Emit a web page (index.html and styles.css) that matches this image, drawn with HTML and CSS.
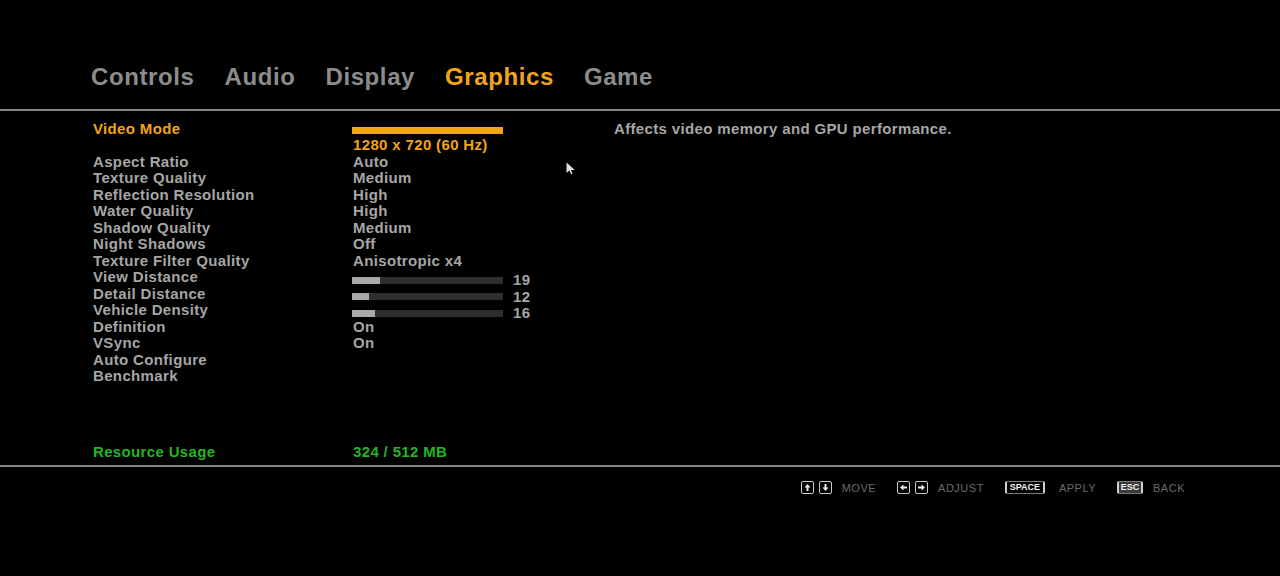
FILE: index.html
```html
<!DOCTYPE html>
<html>
<head>
<meta charset="utf-8">
<link rel="stylesheet" href="styles.css">
</head>
<body>
<div class="screen">
  <nav class="tabs">
    <span class="tab">Controls</span>
    <span class="tab">Audio</span>
    <span class="tab">Display</span>
    <span class="tab active">Graphics</span>
    <span class="tab">Game</span>
  </nav>
  <div class="rule"></div>
  <main class="content">
    <section class="settings">
      <div class="row selected">
        <span class="label">Video Mode</span>
        <div class="value">
          <div class="mode-bar"></div>
          <div class="mode-text">1280 x 720 (60 Hz)</div>
        </div>
      </div>
      <div class="row"><span class="label">Aspect Ratio</span><span class="value">Auto</span></div>
      <div class="row"><span class="label">Texture Quality</span><span class="value">Medium</span></div>
      <div class="row"><span class="label">Reflection Resolution</span><span class="value">High</span></div>
      <div class="row"><span class="label">Water Quality</span><span class="value">High</span></div>
      <div class="row"><span class="label">Shadow Quality</span><span class="value">Medium</span></div>
      <div class="row"><span class="label">Night Shadows</span><span class="value">Off</span></div>
      <div class="row"><span class="label">Texture Filter Quality</span><span class="value">Anisotropic x4</span></div>
      <div class="row"><span class="label">View Distance</span>
        <div class="value slider"><div class="track"><div class="fill" style="width:28px"></div></div><span class="num">19</span></div></div>
      <div class="row"><span class="label">Detail Distance</span>
        <div class="value slider"><div class="track"><div class="fill" style="width:17px"></div></div><span class="num">12</span></div></div>
      <div class="row"><span class="label">Vehicle Density</span>
        <div class="value slider"><div class="track"><div class="fill" style="width:23px"></div></div><span class="num">16</span></div></div>
      <div class="row"><span class="label">Definition</span><span class="value">On</span></div>
      <div class="row"><span class="label">VSync</span><span class="value">On</span></div>
      <div class="row"><span class="label">Auto Configure</span></div>
      <div class="row"><span class="label">Benchmark</span></div>
      <div class="row resource"><span class="label">Resource Usage</span><span class="value">324 / 512 MB</span></div>
    </section>
    <aside class="desc">Affects video memory and GPU performance.</aside>
  </main>
  <div class="rule"></div>
  <footer class="hints">
    <div class="hint">
      <svg class="key" viewBox="0 0 13 13" width="13" height="13"><rect x="0.5" y="0.5" width="12" height="12" rx="1.5" fill="none" stroke="#c8c8c8"/><path d="M6.5 3 L3.5 6.5 H5.5 V10 H7.5 V6.5 H9.5 Z" fill="#e8e8e8"/></svg>
      <svg class="key" viewBox="0 0 13 13" width="13" height="13"><rect x="0.5" y="0.5" width="12" height="12" rx="1.5" fill="none" stroke="#c8c8c8"/><path d="M6.5 10 L3.5 6.5 H5.5 V3 H7.5 V6.5 H9.5 Z" fill="#e8e8e8"/></svg>
      <span class="hint-label">MOVE</span>
    </div>
    <div class="hint">
      <svg class="key" viewBox="0 0 13 13" width="13" height="13"><rect x="0.5" y="0.5" width="12" height="12" rx="1.5" fill="none" stroke="#c8c8c8"/><path d="M3 6.5 L6.5 3.5 V5.5 H10 V7.5 H6.5 V9.5 Z" fill="#e8e8e8"/></svg>
      <svg class="key" viewBox="0 0 13 13" width="13" height="13"><rect x="0.5" y="0.5" width="12" height="12" rx="1.5" fill="none" stroke="#c8c8c8"/><path d="M10 6.5 L6.5 3.5 V5.5 H3 V7.5 H6.5 V9.5 Z" fill="#e8e8e8"/></svg>
      <span class="hint-label">ADJUST</span>
    </div>
    <div class="hint">
      <span class="keycap space">SPACE</span>
      <span class="hint-label wide">APPLY</span>
    </div>
    <div class="hint">
      <span class="keycap esc">ESC</span>
      <span class="hint-label">BACK</span>
    </div>
  </footer>
  <svg class="cursor" viewBox="0 0 10 13" width="10" height="13"><path d="M0.5 0.5 L0.5 11 L3.3 8.6 L5.2 12.2 L6.6 11.5 L4.8 8 L8.8 8 Z" fill="#e0e0e0"/></svg>
</div>
</body>
</html>
```

FILE: styles.css
```css
* { box-sizing: border-box; }

html, body {
  margin: 0;
  padding: 0;
  background: #000;
}

body {
  font-family: "Liberation Sans", Arial, sans-serif;
  font-weight: bold;
  width: 1280px;
  height: 576px;
  overflow: hidden;
}

.screen {
  position: relative;
  width: 1280px;
  height: 576px;
  background: #000;
}

.tabs {
  display: flex;
  gap: 30px;
  padding: 63px 0 0 91px;
  height: 109px;
}

.tab {
  font-size: 24px;
  line-height: 28px;
  letter-spacing: 0.6px;
  color: #8c8c8c;
}

.tab.active {
  color: #f2a41c;
}

.rule {
  height: 2px;
  background: #858585;
}

.content {
  display: flex;
  height: 354px;
  padding: 10px 0 5px 93px;
}

.settings {
  display: flex;
  flex-direction: column;
  width: 521px;
}

.row {
  display: flex;
  font-size: 15px;
  line-height: 16.5px;
  letter-spacing: 0.35px;
  color: #a6a6a6;
}

.label {
  width: 260px;
  flex: none;
}

.value {
  flex: 1;
}

.selected .label {
  color: #f2a41c;
}

.mode-bar {
  height: 7px;
  width: 151px;
  margin: 6px 0 0 -1px;
  background: #f2a41c;
}

.mode-text {
  margin-top: 3px;
  color: #f2a41c;
}

.slider {
  display: flex;
  align-items: center;
  padding-top: 6px;
  height: 16.5px;
}

.track {
  width: 151px;
  height: 7px;
  margin-left: -1px;
  background: #2e2e2e;
}

.fill {
  height: 100%;
  background: #a9a9a9;
}

.num {
  margin-left: 10px;
}

.resource {
  margin-top: auto;
  color: #23b523;
}

.resource .label {
  color: #23b523;
}

.desc {
  font-size: 15px;
  line-height: 16.5px;
  letter-spacing: 0.35px;
  color: #a6a6a6;
}

.hints {
  display: flex;
  justify-content: flex-end;
  align-items: center;
  padding: 1px 95px 0 0;
  height: 40px;
  gap: 21px;
}

.hint {
  display: flex;
  align-items: center;
  gap: 5px;
}

.key {
  display: block;
}

.hint-label {
  margin-left: 5px;
  font-family: "Liberation Sans", Arial, sans-serif;
  font-weight: normal;
  font-size: 11px;
  letter-spacing: 0.5px;
  color: #6a6a6a;
}

.hint-label.wide {
  margin-left: 9px;
}

.keycap {
  display: block;
  height: 13px;
  line-height: 11px;
  font-size: 9px;
  font-weight: bold;
  color: #f0f0f0;
  border: 1px solid #7a7a7a;
  border-left: 2px solid #d0d0d0;
  border-right: 2px solid #d0d0d0;
  border-radius: 2px;
  text-align: center;
}

.keycap.space {
  width: 40px;
}

.keycap.esc {
  width: 26px;
  background: #3a3a3a;
}

.cursor {
  position: absolute;
  left: 566px;
  top: 162px;
}
```
